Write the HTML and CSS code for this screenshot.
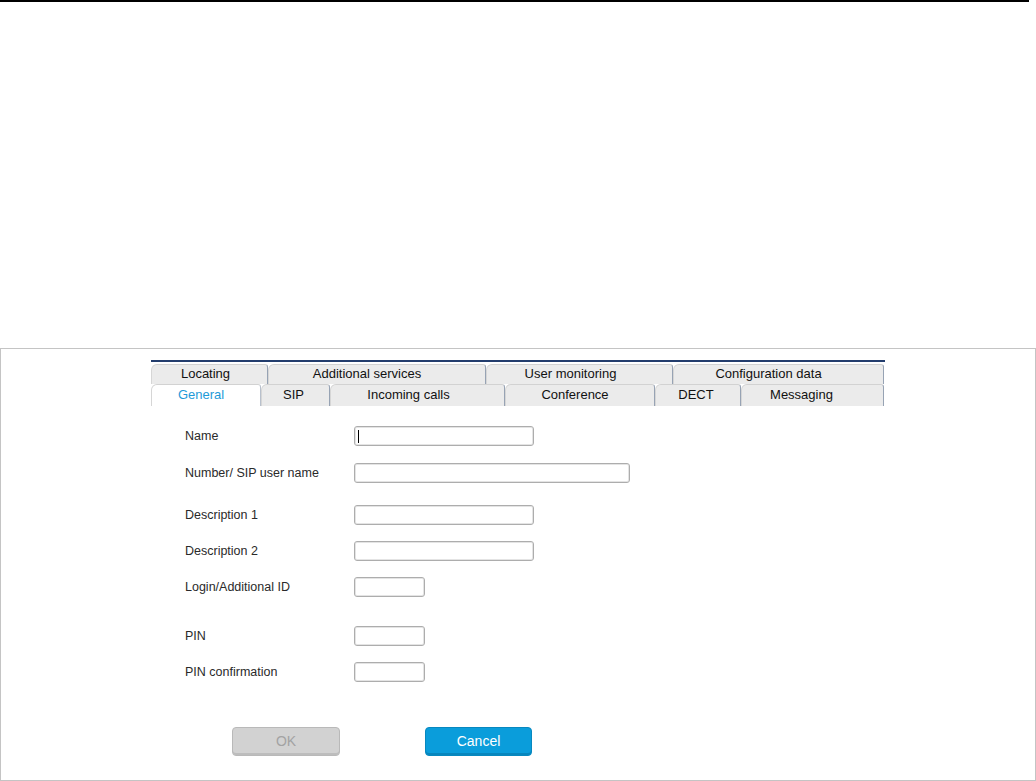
FILE: index.html
```html
<!DOCTYPE html>
<html>
<head>
<meta charset="utf-8">
<link rel="stylesheet" href="styles.css">
</head>
<body>
<div class="topline"></div>
<div class="panel">
  <div class="tabs">
    <div class="tabrow row1">
      <div class="tab t-locating">Locating</div>
      <div class="tab t-additional">Additional services</div>
      <div class="tab t-monitoring">User monitoring</div>
      <div class="tab t-config">Configuration data</div>
    </div>
    <div class="tabrow row2">
      <div class="tab active t-general">General</div>
      <div class="tab t-sip">SIP</div>
      <div class="tab t-incoming">Incoming calls</div>
      <div class="tab t-conference">Conference</div>
      <div class="tab t-dect">DECT</div>
      <div class="tab t-messaging">Messaging</div>
    </div>
  </div>
  <div class="form">
    <div class="row r-name"><span class="label">Name</span><div class="field f-med"><span class="caret"></span></div></div>
    <div class="row r-number"><span class="label">Number/ SIP user name</span><div class="field f-wide"></div></div>
    <div class="row r-desc1"><span class="label">Description 1</span><div class="field f-med"></div></div>
    <div class="row r-desc2"><span class="label">Description 2</span><div class="field f-med"></div></div>
    <div class="row r-login"><span class="label">Login/Additional ID</span><div class="field f-short"></div></div>
    <div class="row r-pin"><span class="label">PIN</span><div class="field f-short"></div></div>
    <div class="row r-pinc"><span class="label">PIN confirmation</span><div class="field f-short"></div></div>
  </div>
  <div class="buttons">
    <div class="btn btn-ok">OK</div>
    <div class="btn btn-cancel">Cancel</div>
  </div>
</div>
</body>
</html>
```
FILE: styles.css
```css
html, body {
  margin: 0;
  padding: 0;
  background: #ffffff;
  font-family: "Liberation Sans", Arial, sans-serif;
}
body {
  width: 1036px;
  height: 781px;
  overflow: hidden;
}
.topline {
  width: 1029px;
  height: 2px;
  background: #000;
}
.panel {
  margin-top: 346px;
  width: 1034px;
  height: 431px;
  border: 1px solid #c4c4c4;
  background: #fff;
}
.tabs {
  margin-left: 150px;
  margin-top: 11px;
  width: 734px;
  border-top: 2px solid #233d6d;
  padding-top: 2px;
}
.tabrow {
  display: flex;
}
.tab {
  box-sizing: border-box;
  background: #ebebeb;
  border-top: 1px solid #d2d2d2;
  border-left: 1px solid #d6d6d6;
  border-right: 1px solid #97a3b4;
  border-radius: 6px 3px 0 0;
  font-size: 13px;
  color: #111;
  text-align: center;
  white-space: nowrap;
  padding-right: 10%;
}
.row1 .tab {
  height: 20px;
  line-height: 18px;
}
.row2 .tab {
  height: 22px;
  line-height: 19px;
}
.tab.active {
  background: #ffffff;
  color: #1e9ad8;
  border-right-color: #b8c0cc;
}
.t-locating { width: 117px; padding-right: 8px; }
.t-additional { width: 218px; padding-right: 20px; }
.t-monitoring { width: 187px; padding-right: 18px; }
.t-config { width: 211px; padding-right: 20px; }
.t-general { width: 110px; padding-right: 10px; }
.t-sip { width: 69px; padding-right: 4px; }
.t-incoming { width: 175px; padding-right: 18px; }
.t-conference { width: 150px; padding-right: 10px; }
.t-dect { width: 86px; padding-right: 4px; }
.t-messaging { width: 143px; padding-right: 22px; }

.form {
  margin-left: 184px;
  padding-top: 20px;
  display: flex;
  flex-direction: column;
}
.row {
  display: flex;
  align-items: center;
  height: 20px;
}
.r-number { margin-top: 17px; }
.r-desc1 { margin-top: 22px; }
.r-desc2 { margin-top: 16px; }
.r-login { margin-top: 16px; }
.r-pin { margin-top: 29px; }
.r-pinc { margin-top: 16px; }
.label {
  width: 169px;
  font-size: 12.5px;
  color: #2a2a2a;
  margin-top: -1px;
}
.field {
  box-sizing: border-box;
  height: 20px;
  border: 1px solid #adadad;
  box-shadow: inset 0 0 0 1px #e4e4e4;
  border-radius: 3px;
  background: #fff;
  position: relative;
}
.f-med { width: 180px; }
.f-wide { width: 276px; }
.f-short { width: 71px; }
.caret {
  position: absolute;
  left: 3px;
  top: 3px;
  width: 1px;
  height: 13px;
  background: #000;
}
.buttons {
  display: flex;
  margin-left: 231px;
  margin-top: 45px;
  gap: 85px;
}
.btn {
  box-sizing: border-box;
  width: 108px;
  height: 29px;
  border-radius: 4px;
  font-size: 14px;
  line-height: 29px;
  text-align: center;
}
.btn-ok {
  background: #d2d2d2;
  color: #a3a3a3;
  border: 1px solid #b9b9b9;
  box-shadow: inset 0 -2px 0 #bdbdbd;
  line-height: 27px;
}
.btn-cancel {
  width: 107px;
  background: #0a9ddb;
  color: #fff;
  border: 1px solid #0888bf;
  box-shadow: inset 0 -2px 0 #0786bd;
  line-height: 27px;
}
```
